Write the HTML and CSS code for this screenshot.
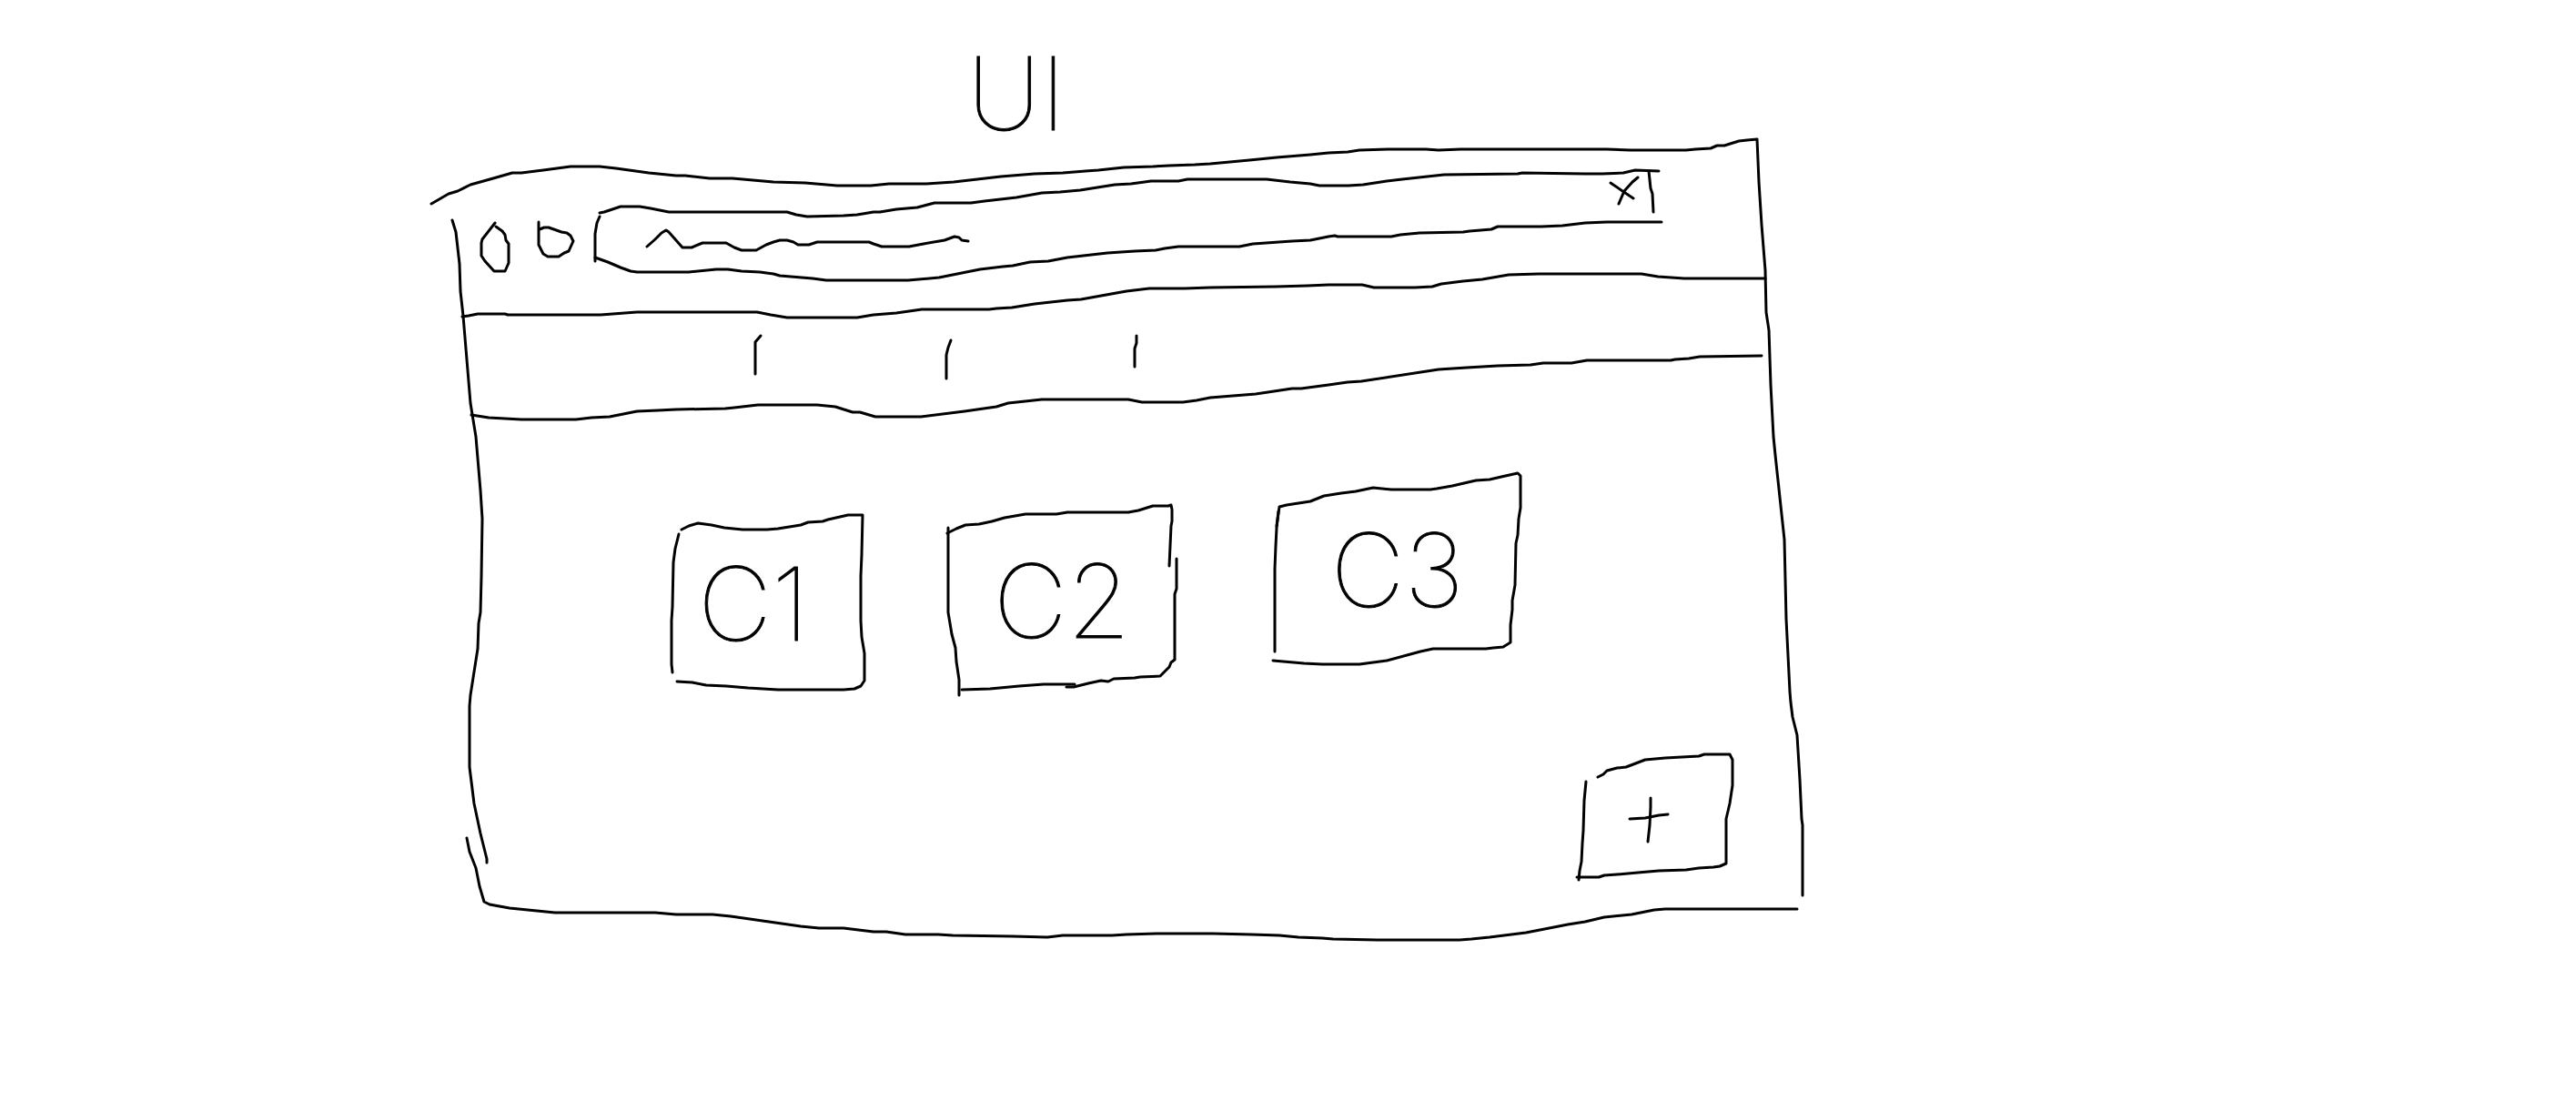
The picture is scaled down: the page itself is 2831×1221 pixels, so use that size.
FILE: index.html
```html
<!DOCTYPE html>
<html lang="en">
<head>
<meta charset="utf-8">
<meta name="viewport" content="width=device-width, initial-scale=1">
<title>UI</title>
<link rel="stylesheet" href="styles.css">
</head>
<body>
<main class="page">
  <h1 class="title">UI</h1>

  <section class="window" aria-label="Browser window">
    <!-- window frame and the two dividers -->
    <svg class="ink window-frame" viewBox="474 153 1510 880" preserveAspectRatio="none" aria-hidden="true">
      <polyline points="474,224 493,213 503,210 517,203 542,196 563,190 573,190 597,187 627,183 659,183 677,185 713,190 743,193 753,193 780,196 805,196 850,200 885,201 920,204 957,204 977,202 1018,202 1048,200 1100,194 1137,191 1168,190 1193,188 1207,187 1235,184 1267,183 1285,182 1313,181 1330,180 1373,176 1403,173 1440,170 1460,168 1481,167 1494,165 1525,164 1567,164 1581,165 1605,164 1766,164 1792,165 1853,165 1863,164 1880,163 1887,160 1895,160 1911,155 1920,154 1931,153 1933,200 1936,247 1940,297 1941,343 1944,363 1946,423 1949,480 1951,500 1961,593 1963,680 1967,760 1968,772 1970,788 1975,808 1978,857 1980,900 1981,907 1981,984"/>
      <polyline points="497,242 501,255 505,290 506,320 509,347 517,443 523,480 528,539 530,570 529,634 528,673 526,685 525,713 517,764 516,776 516,843 521,883 528,916 535,944 535,948"/>
      <polyline points="513,921 516,936 523,954 527,974 532,991 538,994 560,998 610,1003 720,1003 743,1005 783,1005 803,1007 880,1018 900,1020 927,1020 960,1024 974,1024 995,1027 1031,1027 1047,1028 1113,1029 1151,1030 1168,1028 1222,1028 1238,1027 1271,1026 1333,1026 1375,1027 1406,1028 1427,1030 1453,1031 1465,1032 1514,1033 1604,1033 1617,1032 1637,1030 1677,1025 1723,1016 1742,1013 1763,1008 1793,1005 1818,1000 1830,999 1975,999"/>
      <polyline points="508,348 515,347 525,345 555,345 558,346 660,346 700,343 832,343 847,346 865,349 942,349 960,346 985,344 1013,340 1087,340 1095,339 1112,338 1137,334 1173,330 1188,329 1238,320 1263,317 1302,317 1330,316 1402,315 1437,314 1460,313 1497,313 1510,316 1555,316 1574,315 1584,312 1608,309 1629,307 1658,302 1691,301 1804,301 1822,304 1851,306 1940,306"/>
      <polyline points="518,456 537,459 573,461 633,461 650,459 670,458 700,452 723,451 743,450 797,449 807,448 833,445 898,445 918,447 937,453 945,453 962,458 1012,458 1060,452 1095,447 1108,443 1145,439 1240,439 1255,442 1300,442 1315,440 1330,437 1380,433 1420,427 1430,427 1460,423 1481,420 1496,419 1581,406 1612,404 1646,402 1682,401 1696,399 1727,399 1744,396 1836,396 1841,395 1856,394 1868,392 1936,391"/>
    </svg>

    <header class="toolbar">
      <button class="nav-button nav-button-back" type="button" aria-label="Back">
        <svg class="ink" viewBox="527 243 33 58" preserveAspectRatio="none" aria-hidden="true"><polyline points="544,245 530,263 529,267 529,281 533,287 543,298 555,298 559,289 559,268 556,264 555,258 552,254 545,249"/></svg>
      </button>
      <button class="nav-button nav-button-forward" type="button" aria-label="Forward">
        <svg class="ink" viewBox="590 243 41 58" preserveAspectRatio="none" aria-hidden="true"><polyline points="592,244 592,269 597,279 602,282 614,282 620,278 625,276 630,265 627,259 623,256 617,255 603,250 598,250 593,252"/></svg>
      </button>
      <form class="address">
        <svg class="ink address-outline" viewBox="652 185 1174 125" preserveAspectRatio="none" aria-hidden="true">
          <polyline points="659,234 664,233 682,227 703,227 715,229 735,233 865,233 875,236 887,238 927,237 942,236 960,233 967,233 985,230 1008,228 1027,223 1067,223 1082,221 1117,217 1145,212 1165,211 1187,209 1225,203 1243,202 1265,199 1295,199 1305,197 1392,197 1418,200 1440,202 1450,204 1482,204 1498,203 1524,199 1541,197 1587,192 1668,191 1673,190 1742,191 1761,191 1784,190 1797,187 1823,188"/>
          <polyline points="1812,188 1814,207 1816,213 1817,233"/>
          <polyline points="659,238 656,245 654,257 654,287"/>
          <polyline points="654,283 668,288 682,294 693,298 700,299 757,299 787,296 800,296 815,298 835,299 850,301 857,303 893,306 908,308 998,308 1032,305 1077,296 1102,293 1113,292 1132,288 1152,287 1173,283 1217,278 1247,276 1270,275 1280,273 1295,271 1362,271 1377,268 1420,265 1440,264 1460,260 1467,259 1470,260 1529,260 1539,258 1560,256 1608,255 1615,254 1639,252 1646,249 1694,249 1717,248 1742,245 1766,244 1826,244"/>
        </svg>
        <svg class="ink address-scribble" viewBox="710 252 354 25" preserveAspectRatio="none" aria-hidden="true"><polyline points="711,271 720,263 727,256 732,253 735,255 750,272 760,272 772,267 798,267 807,272 815,275 831,275 842,269 850,266 857,264 865,264 872,266 877,269 889,269 898,266 955,266 960,268 969,271 999,271 1015,268 1038,264 1049,260 1054,261 1057,264 1064,265"/></svg>
        <input class="address-input" type="text" aria-label="Address">
        <button class="clear-button" type="reset" aria-label="Clear">
          <svg class="ink" viewBox="1769 194 34 32" preserveAspectRatio="none" aria-hidden="true">
            <polyline points="1770,201 1795,218"/>
            <polyline points="1800,195 1794,200 1785,210 1779,224"/>
          </svg>
        </button>
      </form>
    </header>

    <nav class="tabs" aria-label="Sections">
      <a class="tab tab-first" href="#c1" aria-label="Section one"><svg class="ink" viewBox="829 366 9 54" preserveAspectRatio="none" aria-hidden="true"><polyline points="836,369 830,376 830,411"/></svg></a>
      <a class="tab tab-second" href="#c2" aria-label="Section two"><svg class="ink" viewBox="1039 366 8 54" preserveAspectRatio="none" aria-hidden="true"><polyline points="1045,374 1042,382 1040,390 1040,416"/></svg></a>
      <a class="tab tab-third" href="#c3" aria-label="Section three"><svg class="ink" viewBox="1245 366 8 54" preserveAspectRatio="none" aria-hidden="true"><polyline points="1249,369 1249,377 1247,383 1247,403"/></svg></a>
    </nav>

    <div class="cards">
      <article class="card card-first" id="c1">
        <svg class="ink card-outline" viewBox="737 566 214 194" preserveAspectRatio="none" aria-hidden="true">
          <polyline points="749,582 757,578 767,575 782,577 796,580 806,581 816,582 843,582 855,581 880,577 888,574 904,573 910,571 932,566 948,566 947,610 946,633 946,682 947,700 950,718 950,748 946,754 939,757 927,758 855,758 822,756 798,754 776,753 761,750 744,749"/>
          <polyline points="746,587 742,603 740,618 739,667 738,682 738,730 739,739"/>
        </svg>
        <h2 class="card-label">C1</h2>
      </article>
      <article class="card card-second" id="c2">
        <svg class="ink card-outline" viewBox="1041 555 252 210" preserveAspectRatio="none" aria-hidden="true">
          <polyline points="1042,580 1042,673 1046,697 1050,712 1051,727 1054,747 1054,764"/>
          <polyline points="1041,586 1051,581 1061,577 1076,576 1090,573 1104,569 1127,565 1161,565 1173,563 1240,563 1251,561 1267,556 1284,556 1287,555 1288,560 1288,573 1287,578 1285,622"/>
          <polyline points="1293,614 1293,647 1291,653 1291,725 1287,728 1285,733 1275,743 1253,744 1247,745 1224,746 1218,749 1210,748 1196,751 1180,755 1172,755"/>
          <polyline points="1181,752 1147,752 1120,754 1088,757 1057,758"/>
        </svg>
        <h2 class="card-label">C2</h2>
      </article>
      <article class="card card-third" id="c3">
        <svg class="ink card-outline" viewBox="1399 520 273 212" preserveAspectRatio="none" aria-hidden="true">
          <polyline points="1405,562 1403,580 1402,600 1401,625 1401,716"/>
          <polyline points="1403,578 1406,557 1414,555 1440,551 1455,545 1474,542 1490,540 1509,536 1529,538 1572,538 1579,537 1596,534 1622,528 1637,527 1650,524 1668,520 1671,523 1671,558 1669,570 1668,588 1666,597 1665,643 1662,660 1662,670 1660,687 1660,706 1652,711 1641,712 1633,713 1575,713 1561,716 1524,726 1494,730 1453,730 1433,729 1399,726"/>
        </svg>
        <h2 class="card-label">C3</h2>
      </article>
    </div>

    <footer class="actions">
      <button class="add-button" type="button" aria-label="Add">
        <svg class="ink" viewBox="1733 828 173 140" preserveAspectRatio="none" aria-hidden="true">
          <polyline points="1756,854 1762,851 1766,847 1777,844 1787,843 1808,835 1830,833 1867,831 1873,829 1901,829 1904,835 1904,863 1901,883 1897,900 1897,907 1897,949 1890,952 1883,953 1867,954 1853,956 1823,957 1800,959 1777,961 1763,962 1757,964 1733,964"/>
          <polyline points="1743,859 1741,880 1740,913 1739,927 1738,947 1736,957 1735,967"/>
          <polyline points="1791,900 1808,899 1823,896 1833,895"/>
          <polyline points="1814,877 1814,887 1813,907 1811,925"/>
        </svg>
      </button>
    </footer>
  </section>
</main>
</body>
</html>
```
FILE: styles.css
```css
* {
  box-sizing: border-box;
}

body {
  margin: 0;
  background: #fff;
  color: #000;
  font-family: Inter, "Open Sans", sans-serif;
}

button {
  padding: 0;
  border: 0;
  background: none;
  cursor: pointer;
}

/* pen strokes */
.ink {
  display: block;
  overflow: visible;
  fill: none;
  stroke: #000;
  stroke-width: 3px;
  stroke-linecap: round;
  stroke-linejoin: round;
}

.ink polyline {
  vector-effect: non-scaling-stroke;
}

.page {
  display: grid;
  grid-template-columns: 474fr 1510fr 847fr;
  grid-template-rows: 153px auto;
  align-content: start;
  min-height: 100vh;
}

/* thin lettering, thickened to the weight of the pen */
.title,
.card-label {
  margin: 0;
  font-size: 112px;
  font-weight: 100;
  line-height: 128px;
  -webkit-text-stroke: 1px #000;
}

.title {
  grid-column: 2;
  padding: 38px 0 0 39%;
}

.window {
  position: relative;
  grid-column: 2;
}

.window-frame,
.address-outline,
.card-outline {
  position: absolute;
  inset: 0;
  width: 100%;
  height: 100%;
  pointer-events: none;
}

/* toolbar */
.toolbar {
  display: grid;
  grid-template-columns: 53fr 33fr 30fr 41fr 21fr 1174fr 158fr;
  height: 192px;
  padding-top: 32px;
}

.nav-button {
  height: 58px;
  margin-top: 58px;
}

.nav-button-back {
  grid-column: 2;
}

.nav-button-forward {
  grid-column: 4;
}

.nav-button .ink,
.clear-button .ink,
.tab .ink,
.add-button .ink {
  width: 100%;
  height: 100%;
}

.address {
  position: relative;
  display: grid;
  grid-column: 6;
  grid-template-columns: 58fr 354fr 705fr 34fr 23fr;
  height: 125px;
}

.address-scribble {
  grid-area: 1 / 2;
  width: 100%;
  height: 25px;
  margin-top: 67px;
}

.address-input {
  grid-area: 1 / 2 / 2 / 4;
  width: 100%;
  height: 48px;
  margin-top: 54px;
  padding: 0;
  border: 0;
  background: none;
  font: inherit;
  font-size: 24px;
}

.clear-button {
  grid-area: 1 / 4;
  height: 32px;
  margin-top: 9px;
}

/* tabs */
.tabs {
  display: grid;
  grid-template-columns: 355fr 9fr 201fr 8fr 198fr 8fr 731fr;
  height: 111px;
  padding-top: 21px;
}

.tab {
  height: 54px;
}

.tab-first {
  grid-column: 2;
}

.tab-second {
  grid-column: 4;
}

.tab-third {
  grid-column: 6;
}

/* cards */
.cards {
  display: grid;
  grid-template-columns: 263fr 214fr 90fr 252fr 106fr 273fr 312fr;
  padding-top: 64px;
}

.card {
  position: relative;
  display: flex;
  align-items: center;
  justify-content: center;
}

.card-first {
  grid-column: 2;
  height: 194px;
  margin-top: 46px;
  padding-right: 32px;
}

.card-second {
  grid-column: 4;
  height: 210px;
  margin-top: 35px;
}

.card-third {
  grid-column: 6;
  height: 212px;
}

/* floating action */
.actions {
  display: grid;
  grid-template-columns: 1259fr 173fr 78fr;
  padding: 63px 0 65px;
}

.add-button {
  grid-column: 2;
  height: 140px;
}
```
